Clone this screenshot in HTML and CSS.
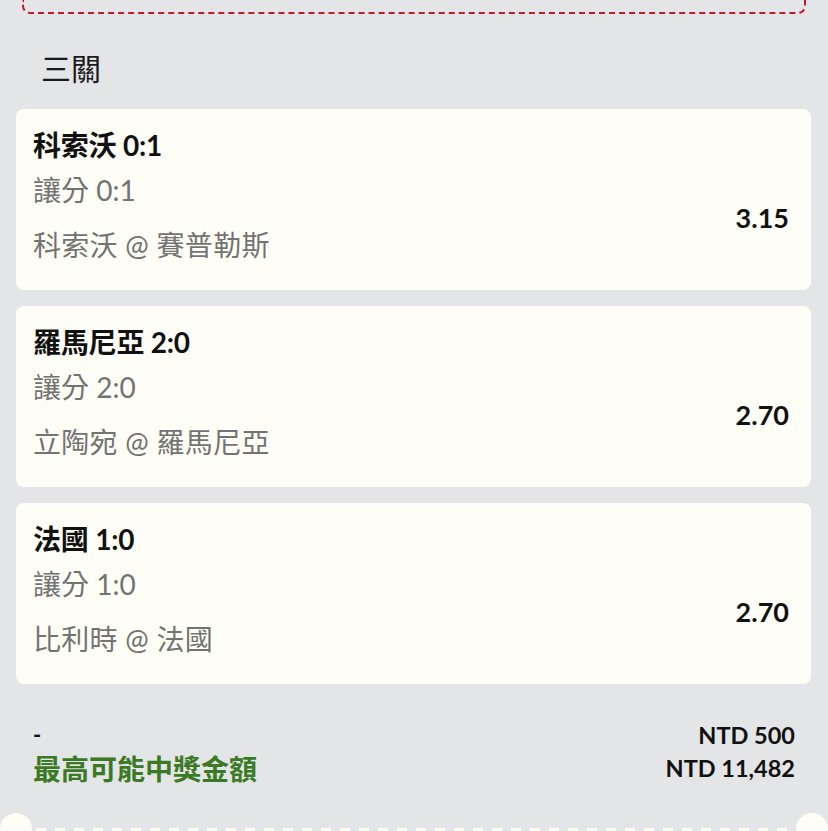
FILE: index.html
```html
<!DOCTYPE html>
<html lang="zh-Hant">
<head>
<meta charset="utf-8">
<link rel="stylesheet" href="styles.css">
</head>
<body>
<div class="page">
  <div class="dashed-box"></div>
  <div class="section-title">三關</div>
  <div class="cards">
    <div class="card">
      <div class="info">
        <div class="pick">科索沃 0:1</div>
        <div class="market">讓分 0:1</div>
        <div class="match">科索沃 @ 賽普勒斯</div>
      </div>
      <div class="odds">3.15</div>
    </div>
    <div class="card">
      <div class="info">
        <div class="pick">羅馬尼亞 2:0</div>
        <div class="market">讓分 2:0</div>
        <div class="match">立陶宛 @ 羅馬尼亞</div>
      </div>
      <div class="odds">2.70</div>
    </div>
    <div class="card">
      <div class="info">
        <div class="pick">法國 1:0</div>
        <div class="market">讓分 1:0</div>
        <div class="match">比利時 @ 法國</div>
      </div>
      <div class="odds">2.70</div>
    </div>
  </div>
  <div class="summary">
    <div class="row">
      <span class="dash">-</span>
      <span class="amount">NTD 500</span>
    </div>
    <div class="row">
      <span class="win-label">最高可能中獎金額</span>
      <span class="amount">NTD 11,482</span>
    </div>
  </div>
  <div class="ticket-edge">
    <span class="notch left"></span>
    <span class="perforation"></span>
    <span class="notch right"></span>
  </div>
</div>
</body>
</html>
```

FILE: styles.css
```css
html, body {
  margin: 0;
  padding: 0;
  background: #e4e5e7;
  overflow: hidden;
}

body {
  font-family: Lato, "Noto Sans CJK TC", sans-serif;
  color: #111;
}

.page {
  width: 828px;
  height: 831px;
  position: relative;
  overflow: hidden;
}

.dashed-box {
  margin: 0 22px;
  height: 12px;
  border: 2px dashed #c01a2c;
  border-top: none;
  border-radius: 0 0 8px 8px;
}

.section-title {
  padding-left: 41px;
  height: 95px;
  line-height: 106px;
  font-size: 30px;
  font-weight: 400;
  color: #1a1a1a;
  font-family: "Noto Sans CJK TC", sans-serif;
}

.cards {
  display: flex;
  flex-direction: column;
  gap: 16px;
  padding: 0 17px 0 16px;
}

.card {
  background: #fffef6;
  border-radius: 8px;
  height: 181px;
  box-sizing: border-box;
  padding: 18px 22px 0 17px;
  display: flex;
  align-items: center;
  justify-content: space-between;
}

.info {
  align-self: flex-start;
}

.pick {
  font-size: 28px;
  font-weight: 700;
  line-height: 36px;
  color: #111;
  letter-spacing: -0.2px;
}

.market {
  font-size: 28px;
  line-height: 54px;
  color: #737373;
}

.match {
  font-size: 28px;
  line-height: 56px;
  color: #737373;
  letter-spacing: 0.3px;
}

.odds {
  font-size: 27px;
  font-weight: 700;
  color: #111;
  padding-top: 17px;
}

.summary {
  padding: 34px 33px 0 33px;
  display: flex;
  flex-direction: column;
}

.row {
  display: flex;
  justify-content: space-between;
  align-items: center;
  height: 33px;
}

.dash {
  font-size: 22px;
  font-weight: 700;
}

.amount {
  font-size: 23.5px;
  font-weight: 700;
  color: #111;
}

.win-label {
  font-size: 28px;
  font-weight: 700;
  color: #3b7a25;
  font-family: "Noto Sans CJK TC", sans-serif;
}

.ticket-edge {
  position: absolute;
  left: 0;
  right: 0;
  top: 813px;
  height: 32px;
}

.notch {
  position: absolute;
  top: 0;
  width: 32px;
  height: 32px;
  border-radius: 50%;
  background: #fffef6;
}

.notch.left { left: 0; }
.notch.right { right: 0; }

.perforation {
  position: absolute;
  left: 36px;
  right: 36px;
  top: 15px;
  height: 4px;
  background: repeating-linear-gradient(90deg, #fffef6 0 10px, transparent 10px 19px);
}
```
